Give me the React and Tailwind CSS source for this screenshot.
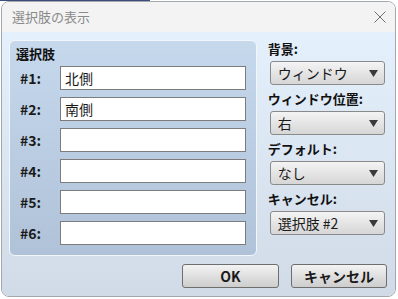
import React from "react";

const font = { fontFamily: '"Noto Sans CJK JP", "Noto Sans", sans-serif' };

const rows = [
  { label: "#1:", value: "北側" },
  { label: "#2:", value: "南側" },
  { label: "#3:", value: "" },
  { label: "#4:", value: "" },
  { label: "#5:", value: "" },
  { label: "#6:", value: "" },
];

const fields = [
  { label: "背景:", value: "ウィンドウ" },
  { label: "ウィンドウ位置:", value: "右" },
  { label: "デフォルト:", value: "なし" },
  { label: "キャンセル:", value: "選択肢 #2" },
];

function Select({ value }) {
  return (
    <div className="mx-[2px] flex h-[24px] items-center justify-between rounded-[3px] border border-[#8a8a8a] bg-gradient-to-b from-[#f4f4f4] to-[#d6d6d6] pl-[7px] pr-[6px] text-[14px] leading-none text-[#1a1a1a]">
      <span>{value}</span>
      <svg width="9" height="7" viewBox="0 0 9 7">
        <path d="M0 0 H9 L4.5 7 Z" fill="#3a3a3a" />
      </svg>
    </div>
  );
}

export default function App() {
  return (
    <div className="h-[299px] w-[398px] bg-white" style={font}>
      <div className="h-[1px] w-[150px] bg-[#3d4c7a]" />
      <div className="ml-px flex h-[296px] w-[395px] flex-col overflow-hidden rounded-[8px] border border-[#a3a8ae]">
        {/* barra de título */}
        <div className="flex h-[30px] shrink-0 items-center justify-between bg-[#f3f3f3] pl-[10px] pr-[9px]">
          <span className="text-[13px] text-[#8a8a8a]">選択肢の表示</span>
          <svg width="12" height="12" viewBox="0 0 12 12">
            <path d="M0.5 0.5 L11.5 11.5 M11.5 0.5 L0.5 11.5" stroke="#707070" strokeWidth="1" />
          </svg>
        </div>

        <div className="flex flex-1 flex-col bg-gradient-to-b from-[#e4f0fc] to-[#d0dbe7] pl-[7px] pr-[8px]">
          <div className="flex gap-[11px] pt-[8px]">
            {/* grupo de opções */}
            <div className="h-[216px] w-[249px] rounded-[6px] border border-[#f2f6fb] bg-gradient-to-b from-[#c6d8ec] to-[#afc2d8] pl-[6px] pr-[10px] pt-[4px]">
              <div className="h-[18px] text-[13px] font-bold leading-[18px] text-[#111]">選択肢</div>
              <div className="mt-[3px] flex flex-col gap-[7px]">
                {rows.map((r) => (
                  <div key={r.label} className="flex items-center">
                    <span className="w-[44px] pl-[4px] text-[14px] font-bold text-[#1a1a1a]">{r.label}</span>
                    <div className="flex h-[24px] flex-1 items-center border border-[#7c7c7c] bg-white pl-[4px] text-[14px] leading-none text-[#1a1a1a]">
                      {r.value}
                    </div>
                  </div>
                ))}
              </div>
            </div>

            {/* campos à direita */}
            <div className="flex w-[120px] flex-col">
              {fields.map((f, i) => (
                <div key={f.label} className={i === 0 ? "" : "mt-[5px]"}>
                  <div className="mb-[3px] h-[18px] text-[13px] font-bold leading-[18px] text-[#111]">{f.label}</div>
                  <Select value={f.value} />
                </div>
              ))}
            </div>
          </div>

          <div className="mt-[8px] flex justify-end gap-[12px]">
            <button className="h-[24px] w-[97px] rounded-[3px] border border-[#6e6e6e] bg-gradient-to-b from-[#f3f3f3] to-[#cdcdcd] text-[14px] font-bold leading-none text-[#1a1a1a]">
              OK
            </button>
            <button className="h-[24px] w-[96px] rounded-[3px] border border-[#6e6e6e] bg-gradient-to-b from-[#f3f3f3] to-[#cdcdcd] text-[14px] font-bold leading-none text-[#1a1a1a]">
              キャンセル
            </button>
          </div>
        </div>
      </div>
    </div>
  );
}
